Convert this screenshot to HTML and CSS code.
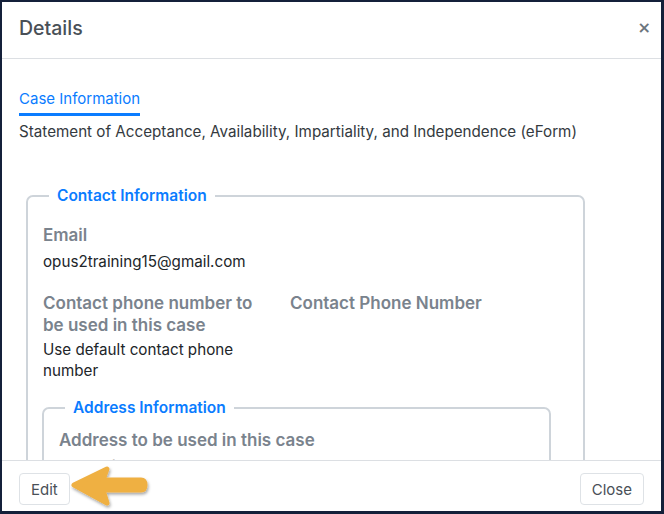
FILE: index.html
```html
<!DOCTYPE html>
<html lang="en">
<head>
<meta charset="utf-8">
<title>Details</title>
<link rel="stylesheet" href="styles.css">
</head>
<body>
<div class="frame">
  <div class="modal">
    <header class="modal-header">
      <h5 class="modal-title">Details</h5>
      <button class="close" type="button">&times;</button>
    </header>
    <div class="modal-body">
      <nav class="tabs"><a class="tab active">Case Information</a></nav>
      <p class="form-title">Statement of Acceptance, Availability, Impartiality, and Independence (eForm)</p>
      <fieldset class="group outer">
        <legend>Contact Information</legend>
        <div class="field">
          <div class="label">Email</div>
          <div class="value">opus2training15@gmail.com</div>
        </div>
        <div class="row">
          <div class="field">
            <div class="label">Contact phone number to be used in this case</div>
            <div class="value">Use default contact phone number</div>
          </div>
          <div class="field">
            <div class="label">Contact Phone Number</div>
          </div>
        </div>
        <fieldset class="group inner">
          <legend>Address Information</legend>
          <div class="field">
            <div class="label">Address to be used in this case</div>
            <div class="value">Use default address</div>
          </div>
        </fieldset>
      </fieldset>
    </div>
    <footer class="modal-footer">
      <button class="btn" type="button">Edit</button>
      <button class="btn" type="button">Close</button>
    </footer>
  </div>
  <svg class="pointer" width="84" height="48" viewBox="0 0 84 48" aria-hidden="true">
    <defs>
      <filter id="sh" x="-20%" y="-20%" width="140%" height="150%">
        <feDropShadow dx="1" dy="2" stdDeviation="1.4" flood-color="#000" flood-opacity="0.35"/>
      </filter>
    </defs>
    <path filter="url(#sh)" fill="#efb043" stroke="#efb043" stroke-width="5" stroke-linejoin="round" stroke-linecap="round"
      d="M6 21 L39 5 L35 16 L73 16 Q77 16 77 21 Q77 26 73 26 L35 26 L39 39 Z"/>
  </svg>
</div>
</body>
</html>
```
FILE: styles.css
```css
* { box-sizing: border-box; }
html, body { margin: 0; padding: 0; background: #fff; }
body {
  font-family: Inter, "Noto Sans", "Liberation Sans", sans-serif;
  color: #212529;
  width: 664px;
  height: 514px;
  overflow: hidden;
}
.frame {
  position: relative;
  width: 664px;
  height: 514px;
  border-style: solid;
  border-color: #14203a;
  border-width: 2px 3px 3px 2px;
  background: #fff;
}
.modal {
  display: flex;
  flex-direction: column;
  height: 100%;
}
.modal-header {
  flex: 0 0 57px;
  display: flex;
  align-items: center;
  justify-content: space-between;
  padding: 0 10px 4px 17px;
  border-bottom: 1px solid #dcdfe3;
}
.modal-title {
  margin: 0;
  font-size: 19.5px;
  font-weight: 500;
  color: #495057;
}
.close {
  border: 0;
  background: none;
  padding: 0;
  font-family: "DejaVu Sans", sans-serif;
  font-size: 16px;
  font-weight: 700;
  color: #6c757d;
  line-height: 1;
}
.modal-body {
  flex: 1;
  overflow: hidden;
  padding: 30px 17px 0;
}
.tabs { display: flex; }
.tab {
  display: block;
  font-size: 15px;
  line-height: 20px;
  color: #0a7cff;
  padding-bottom: 4px;
  border-bottom: 3px solid #0a7cff;
}
.form-title {
  margin: 6px 0 0;
  font-size: 15.2px;
  line-height: 20px;
  color: #343a40;
}
.group {
  border: 2px solid #ced4da;
  border-radius: 7px;
  margin: 0;
  min-width: 0;
}
.group legend {
  margin-left: 6px;
  padding: 0 8px;
  font-size: 15.5px;
  line-height: 20px;
  font-weight: 600;
  color: #0a7cff;
}
.outer {
  margin: 44px 0 0 7px;
  width: 559px;
  padding: 18px 15px 20px;
}
.inner {
  margin: 17px 17px 0 -1px;
  padding: 11px 15px 20px;
}
.label {
  font-size: 17px;
  line-height: 22px;
  font-weight: 600;
  color: #7a838d;
}
.value {
  margin-top: 5px;
  font-size: 15.2px;
  line-height: 21px;
  color: #212529;
}
.row {
  display: grid;
  grid-template-columns: 232px 232px;
  column-gap: 15px;
  margin-top: 20px;
}
.row .value { margin-top: 3px; }
.modal-footer {
  flex: 0 0 auto;
  display: flex;
  justify-content: space-between;
  padding: 12px 17px 6px;
  border-top: 1px solid #dcdfe3;
  background: #fff;
}
.btn {
  height: 32px;
  padding: 0 11px;
  border: 1px solid #dee2e6;
  border-radius: 4px;
  background: #fff;
  font-family: inherit;
  font-size: 15px;
  color: #495057;
}
.pointer {
  position: absolute;
  left: 66px;
  top: 462px;
}
```
